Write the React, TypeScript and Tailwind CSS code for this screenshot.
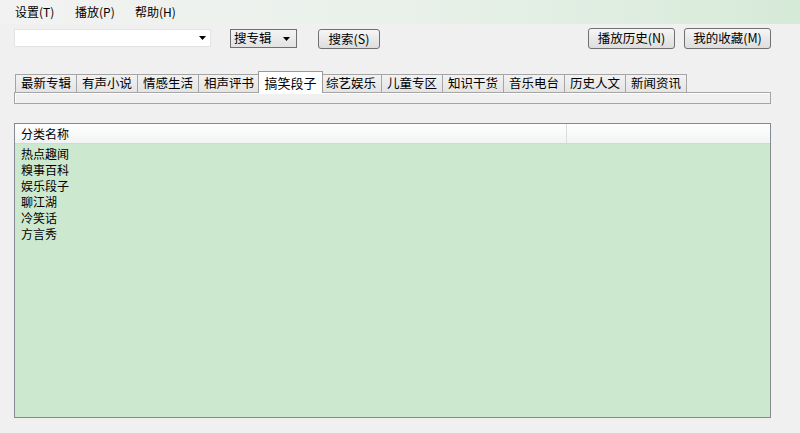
import { ChevronDown } from "lucide-react"

const menus = ["设置(T)", "播放(P)", "帮助(H)"]

const tabs = [
  "最新专辑",
  "有声小说",
  "情感生活",
  "相声评书",
  "搞笑段子",
  "综艺娱乐",
  "儿童专区",
  "知识干货",
  "音乐电台",
  "历史人文",
  "新闻资讯",
]

const categories = ["热点趣闻", "糗事百科", "娱乐段子", "聊江湖", "冷笑话", "方言秀"]

function Caret() {
  return (
    <svg width="7" height="4" viewBox="0 0 7 4" className="shrink-0">
      <path d="M0 0h7L3.5 4z" fill="#000" />
    </svg>
  )
}

export default function App() {
  return (
    <div className="w-[800px] h-[433px] overflow-hidden bg-[#f0f0f0] text-[12px] text-black font-['Noto_Sans_CJK_SC','Noto_Sans',sans-serif] flex flex-col">
      {/* menu bar */}
      <div className="h-[24px] flex items-center pl-[15px] bg-gradient-to-r from-[#f2f2f2] via-[#e9f1ea] to-[#d6ead8]">
        {menus.map((m) => (
          <span key={m} className="w-[60px] leading-none">
            {m}
          </span>
        ))}
      </div>

      {/* toolbar */}
      <div className="mt-[4px] h-[21px] flex items-start pl-[14px] pr-[29px]">
        <div className="mt-[1px] w-[197px] h-[18px] bg-white border border-[#e3e3e3] flex items-center justify-end pr-[4px]">
          <Caret />
        </div>
        <div className="mt-[1px] ml-[19px] w-[67px] h-[19px] border border-[#707070] bg-gradient-to-b from-[#f4f4f4] to-[#e2e2e2] flex items-center justify-between pl-[3px] pr-[6px] leading-none text-[12.5px]">
          <span>搜专辑</span>
          <Caret />
        </div>
        <button className="mt-[1px] ml-[21px] w-[62px] h-[20px] rounded-[3px] border border-[#707070] bg-gradient-to-b from-[#f6f6f6] to-[#dddddd] leading-none text-[12.5px]">
          搜索(S)
        </button>
        <button className="ml-auto w-[87px] h-[21px] rounded-[3px] border border-[#707070] bg-gradient-to-b from-[#f6f6f6] to-[#dddddd] leading-none text-[12.5px]">
          播放历史(N)
        </button>
        <button className="ml-[9px] w-[87px] h-[21px] rounded-[3px] border border-[#707070] bg-gradient-to-b from-[#f6f6f6] to-[#dddddd] leading-none text-[12.5px]">
          我的收藏(M)
        </button>
      </div>

      {/* tabs */}
      <div className="mt-[22px] h-[21px] flex items-end pl-[15px] relative z-10 text-[12.5px]">
        {tabs.map((t, i) =>
          t === "搞笑段子" ? (
            <div
              key={t}
              className="-ml-[2px] -mr-[2px] w-[65px] h-[22px] -mb-px bg-white border border-b-0 border-[#9a9a9a] flex items-center justify-center leading-none text-[13px] relative z-10"
            >
              {t}
            </div>
          ) : (
            <div
              key={t}
              className={
                i === 0
                  ? "w-[62px] h-[18px] bg-gradient-to-b from-[#f2f2f2] to-[#e4e4e4] border border-b-0 border-[#a5a5a5] flex items-center justify-center leading-none"
                  : "w-[62px] h-[18px] bg-gradient-to-b from-[#f2f2f2] to-[#e4e4e4] border border-b-0 border-[#a5a5a5] -ml-px flex items-center justify-center leading-none"
              }
            >
              {t}
            </div>
          )
        )}
      </div>
      <div className="ml-[14px] w-[757px] h-[12px] border border-[#a5a5a5] bg-[#f0f0f0] shadow-[inset_1px_1px_0_#ffffff]" />

      {/* list */}
      <div className="mt-[19px] ml-[14px] w-[757px] h-[295px] border border-[#848a90] bg-[#cce8cf] flex flex-col">
        <div className="h-[20px] flex bg-gradient-to-b from-white to-[#f2f3f4] border-b border-[#d6d6d6]">
          <div className="w-[552px] border-r border-[#dcdcdc] flex items-center pl-[6px] leading-none">分类名称</div>
          <div className="flex-1" />
        </div>
        <div className="pt-[2px] pl-[6px]">
          {categories.map((c) => (
            <div key={c} className="h-[16px] leading-[16px]">
              {c}
            </div>
          ))}
        </div>
      </div>
    </div>
  )
}
